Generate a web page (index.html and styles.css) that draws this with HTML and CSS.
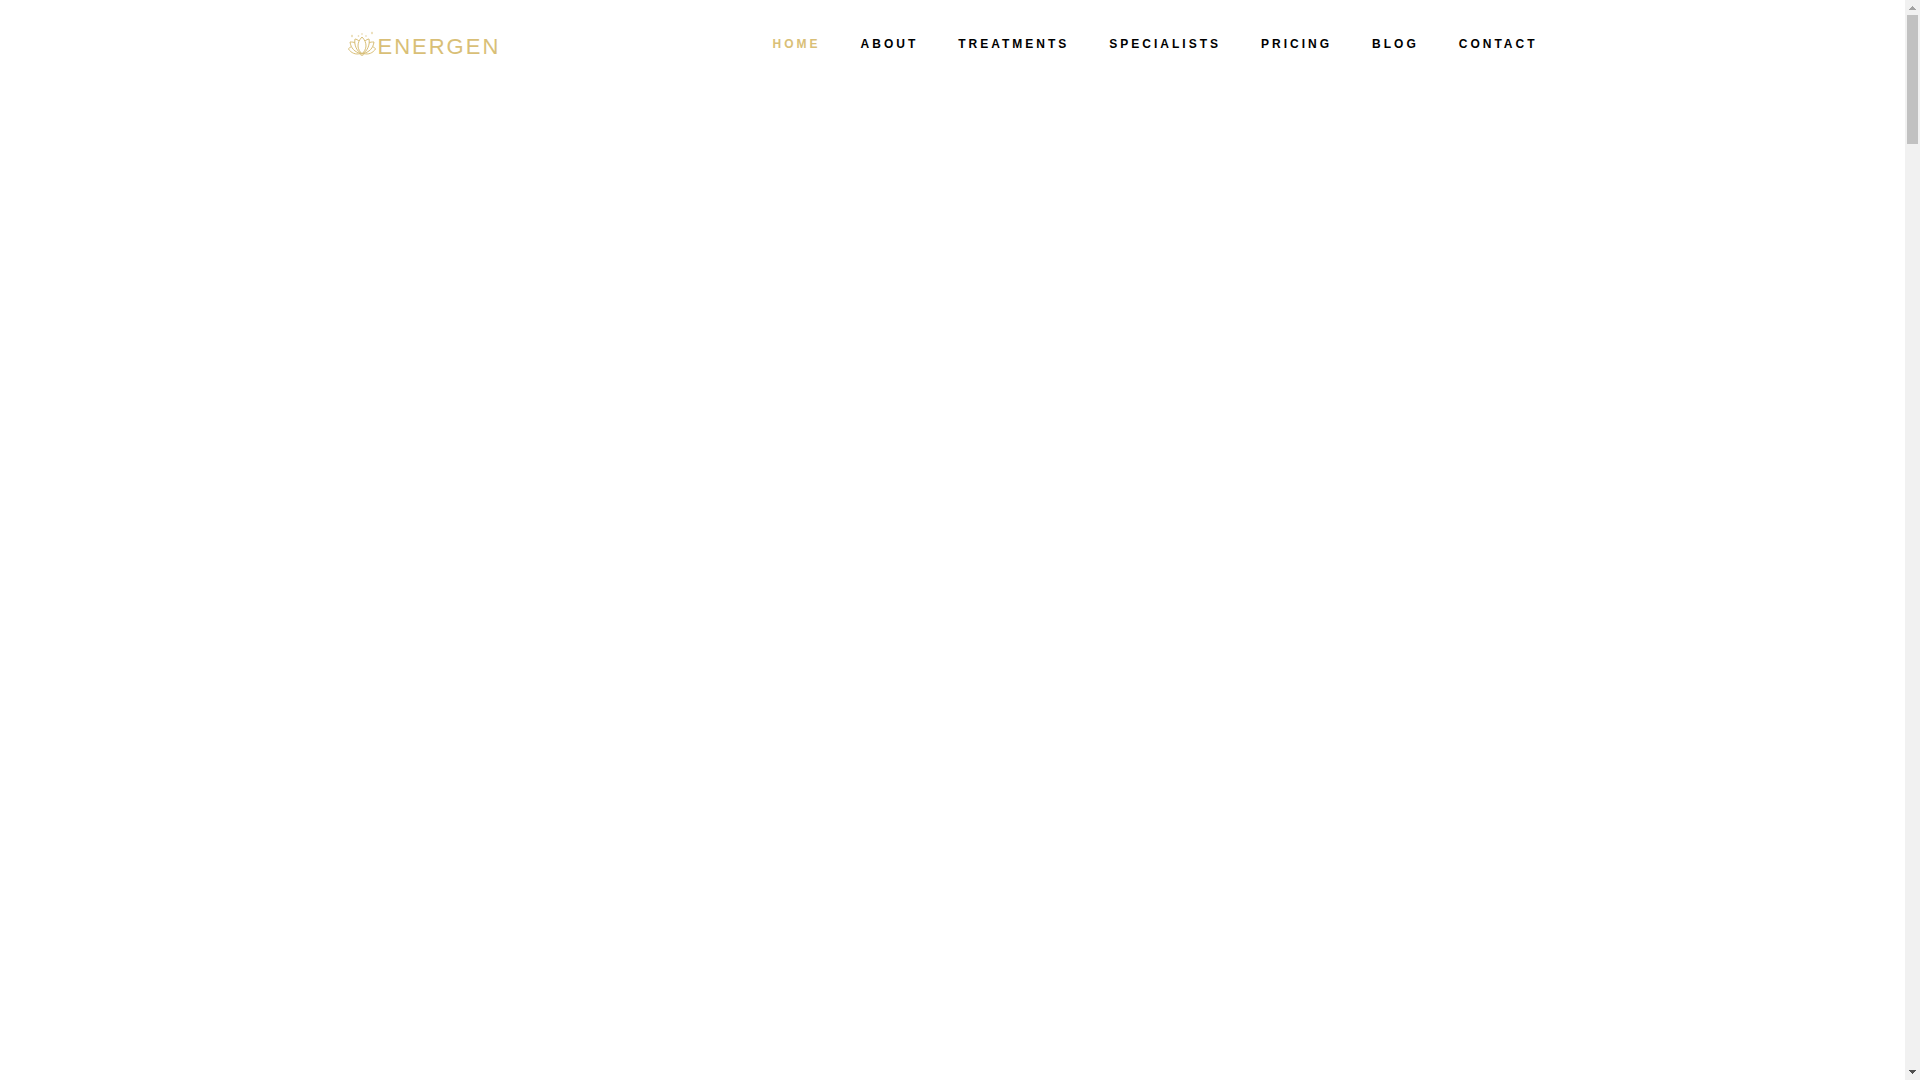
FILE: index.html
```html
<!DOCTYPE html>
<html lang="en">
<head>
	<meta charset="UTF-8">
	<title>Energen</title>
	<link rel="stylesheet" href="styles.css">
</head>
<body>
	<div id="page">
		<header class="header">
			<div class="container">
				<a href="#" class="logo">
					<svg class="lotus" viewBox="0 0 30 26" width="30" height="26" aria-hidden="true">
						<path d="M14 6C11 9 10 12 10 15C10 18 12 21 14 23C16 21 18 18 18 15C18 12 17 9 14 6Z"/>
						<path d="M11 10C10 9 8 8 7 8C6 13 8 20 14 23C20 20 22 13 21 8C20 8 18 9 17 10"/>
						<path d="M7 12C6 11 4 11 2 11C3 17 6 21 14 23C22 21 25 17 26 11C24 11 22 11 21 12"/>
						<path d="M3 16C2 16 1 17 0.5 18C3 22 8 24 12 22.500C13 22 15 22 16 22.500C20 24 25 22 27.500 18C27 17 26 16 25 16"/>
						<path d="M12 22.500C12 25 16 25 16 22.500"/>
						<g class="sparks">
							<path d="M4 3.500L5 5L4 6.500L3 5Z"/>
							<path d="M24 0.500L25 2L24 3.500L23 2Z"/>
							<circle cx="10.500" cy="5" r=".8"/>
							<circle cx="14" cy="3" r=".8"/>
							<circle cx="18" cy="5" r=".8"/>
						</g>
					</svg>
					<span>ENERGEN</span>
				</a>
				<nav>
					<ul class="menu">
						<li><a href="#" class="active">HOME</a></li>
						<li><a href="#">ABOUT</a></li>
						<li><a href="#">TREATMENTS</a></li>
						<li><a href="#">SPECIALISTS</a></li>
						<li><a href="#">PRICING</a></li>
						<li><a href="#">BLOG</a></li>
						<li><a href="#">CONTACT</a></li>
					</ul>
				</nav>
			</div>
		</header>
	</div>
	<div class="scrollbar" aria-hidden="true">
		<span class="arrow">
			<svg viewBox="0 0 15 15" width="15" height="15" shape-rendering="crispEdges"><path fill="#a3a3a3" d="M7 6h1v1h1v1h1v1h1v1H4V9h1V8h1V7h1z"/></svg>
		</span>
		<span class="thumb"></span>
		<span class="arrow down">
			<svg viewBox="0 0 15 15" width="15" height="15" shape-rendering="crispEdges"><path fill="#505050" d="M4 5h7v1h-1v1H9v1H8v1H7V8H6V7H5V6H4z"/></svg>
		</span>
	</div>
</body>
</html>
```
FILE: styles.css
```css
*{
	margin: 0;
	padding: 0;
	box-sizing: border-box;
}
body{
	display: flex;
	min-height: 100vh;
	background-color: #fff;
	font-family: "Liberation Sans", Arial, sans-serif;
}
a{
	text-decoration: none;
}
ul{
	list-style: none;
}
#page{
	flex: 1;
}
.container{
	display: flex;
	justify-content: space-between;
	align-items: center;
	max-width: 1240px;
	height: 88px;
	margin: 0 auto;
	padding: 0 15px;
}
.logo{
	display: flex;
	align-items: flex-end;
	color: #d9bf77;
	font-size: 22px;
	line-height: 20px;
	letter-spacing: 2px;
}
.lotus{
	fill: none;
	stroke: #d9bf77;
	stroke-width: 1;
}
.lotus .sparks{
	fill: #d9bf77;
	stroke: none;
	opacity: .7;
}
.menu{
	display: flex;
}
.menu a{
	display: block;
	padding: 0 20px;
	color: #000;
	font-size: 12px;
	font-weight: bold;
	line-height: 24px;
	letter-spacing: 3px;
}
.menu .active{
	color: #d9bf77;
}
.scrollbar{
	display: flex;
	flex-direction: column;
	width: 15px;
	background-color: #f1f1f1;
}
.arrow{
	height: 15px;
}
.arrow svg{
	display: block;
}
.down{
	margin-top: auto;
}
.thumb{
	height: 129px;
	margin: 0 2px;
	background-color: #c1c1c1;
}
```
